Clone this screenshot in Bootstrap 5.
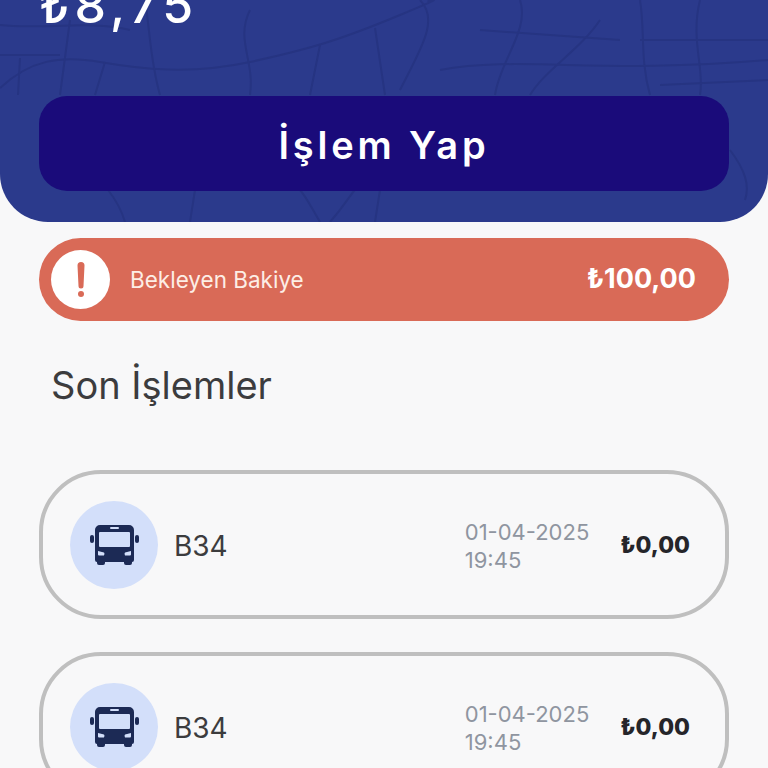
<!DOCTYPE html>
<html lang="tr">
<head>
    <meta charset="UTF-8">
    <meta name="viewport" content="width=device-width, initial-scale=1">
    <title>Kart</title>
    <link rel="stylesheet" href="https://cdn.jsdelivr.net/npm/bootstrap@5.3.0/dist/css/bootstrap.min.css">
    <style>
        html, body { height: 768px; overflow: hidden; }
        body { background: #f8f8f9; font-family: "Inter", "Liberation Sans", sans-serif; color: #3c3c3e; }
        .hero-box { height: 222px; background: #2b3a8c; border-radius: 0 0 48px 48px; padding: 0 39px; overflow: hidden; }
        .map-lines { top: 0; left: 0; }
        .hero-amount { height: 96px; margin: 0; color: #fff; font-size: 50px; font-weight: 500; line-height: 50px; letter-spacing: 5px; transform: translateY(-20px); }
        .action-btn { height: 95px; width: 100%; padding-top: 10px; background: #1a0b7a; color: #fff; border: 0; border-radius: 28px; font-size: 38px; font-weight: 600; letter-spacing: 3.800px; }
        .pending-box { height: 83px; margin: 16px 39px 0; background: #d96a57; border-radius: 42px; padding: 0 33px 0 12px; color: #fff; }
        .alert-dot { width: 59px; height: 59px; background: #fff; }
        .pending-label { font-size: 22.500px; margin-left: 20px; color: #fdeee6; }
        .pending-sum { font-size: 27px; font-weight: 700; }
        .section-title { font-size: 38px; font-weight: 400; margin: 40px 0 0 51px; line-height: 48px; }
        .tx-box { height: 149px; margin: 0 39px 33px; border: 4px solid #bfbfbf; border-radius: 62px; padding: 2px 35px 0 27px; }
        .tx-list { margin-top: 61px; }
        .bus-dot { width: 88px; height: 88px; margin-top: -2px; background: #d3dffa; }
        .tx-name { font-size: 28px; margin-left: 16px; }
        .tx-date { font-size: 22px; line-height: 28px; color: #8f95a0; margin-right: 31px; }
        .tx-sum { font-size: 23px; font-weight: 800; color: #25252a; }
    </style>
</head>
<body>
    <div class="hero-box position-relative">
        <svg class="map-lines position-absolute" width="768" height="222" viewBox="0 0 768 222" fill="none" stroke="#263482" stroke-width="2">
            <path d="M0 88 C30 60 60 55 100 62 S190 75 250 62 340 40 400 15 420 5 430 0"/>
            <path d="M420 0 C440 20 420 50 400 90M250 10 C235 40 255 60 250 95M145 0 C150 30 150 60 160 95"/>
            <path d="M0 55 H60M20 58 L18 95M70 20 L60 95M105 62 L95 95M320 45 L310 95M375 28 L385 95"/>
            <path d="M520 0 C530 30 500 60 495 95M600 20 C580 50 545 70 530 95M640 0 C645 30 640 60 650 95M700 0 C690 40 705 70 700 95"/>
            <path d="M440 70 C520 55 600 75 768 60M640 40 H768M480 30 L620 40M660 85 L768 80M0 25 C40 30 90 20 130 30"/>
            <path d="M125 222 C120 205 112 195 108 190M190 222 L195 190M320 222 C310 205 305 195 300 190M330 222 C345 205 350 195 355 190M375 222 L380 190M730 150 C745 170 750 185 745 200"/>
        </svg>
        <div class="position-relative">
            <p class="hero-amount">₺8,75</p>
            <button type="button" class="btn action-btn">İşlem Yap</button>
        </div>
    </div>

    <div class="pending-box d-flex align-items-center">
        <div class="alert-dot rounded-circle d-flex align-items-center justify-content-center">
            <svg width="8" height="35" viewBox="0 0 8 35"><path d="M4 0a3.500 3.500 0 0 1 3.500 3.500L6.500 24a2.500 2.500 0 0 1-5 0L.5 3.500A3.500 3.500 0 0 1 4 0z" fill="#d96a57"/><circle cx="4" cy="32" r="3" fill="#d96a57"/></svg>
        </div>
        <span class="pending-label">Bekleyen Bakiye</span>
        <span class="pending-sum ms-auto">₺100,00</span>
    </div>

    <h2 class="section-title">Son İşlemler</h2>

    <div class="tx-list">
        <div class="tx-box d-flex align-items-center">
            <div class="bus-dot rounded-circle d-flex align-items-center justify-content-center">
                <svg width="49" height="40" viewBox="0 0 49 40"><path fill="#1c2a55" d="M10 0h29a5 5 0 0 1 5 5v30a2 2 0 0 1-2 2v1a2 2 0 0 1-2 2h-4a2 2 0 0 1-2-2v-1H15v1a2 2 0 0 1-2 2H9a2 2 0 0 1-2-2v-1a2 2 0 0 1-2-2V5a5 5 0 0 1 5-5z"/><rect x="0" y="10" width="4" height="8" rx="2" fill="#1c2a55"/><rect x="45" y="10" width="4" height="8" rx="2" fill="#1c2a55"/><rect x="9" y="7" width="31" height="15" rx="1" fill="#d3dffa"/><rect x="20" y="2" width="9" height="2" rx="1" fill="#d3dffa"/><path d="M8 26l6 1.500q1 1 0 3H9q-1 0-1-1zM41 26l-6 1.500q-1 1 0 3h5q1 0 1-1z" fill="#d3dffa"/></svg>
            </div>
            <span class="tx-name">B34</span>
            <div class="tx-date ms-auto">01-04-2025<br>19:45</div>
            <span class="tx-sum">₺0,00</span>
        </div>
        <div class="tx-box d-flex align-items-center">
            <div class="bus-dot rounded-circle d-flex align-items-center justify-content-center">
                <svg width="49" height="40" viewBox="0 0 49 40"><path fill="#1c2a55" d="M10 0h29a5 5 0 0 1 5 5v30a2 2 0 0 1-2 2v1a2 2 0 0 1-2 2h-4a2 2 0 0 1-2-2v-1H15v1a2 2 0 0 1-2 2H9a2 2 0 0 1-2-2v-1a2 2 0 0 1-2-2V5a5 5 0 0 1 5-5z"/><rect x="0" y="10" width="4" height="8" rx="2" fill="#1c2a55"/><rect x="45" y="10" width="4" height="8" rx="2" fill="#1c2a55"/><rect x="9" y="7" width="31" height="15" rx="1" fill="#d3dffa"/><rect x="20" y="2" width="9" height="2" rx="1" fill="#d3dffa"/><path d="M8 26l6 1.500q1 1 0 3H9q-1 0-1-1zM41 26l-6 1.500q-1 1 0 3h5q1 0 1-1z" fill="#d3dffa"/></svg>
            </div>
            <span class="tx-name">B34</span>
            <div class="tx-date ms-auto">01-04-2025<br>19:45</div>
            <span class="tx-sum">₺0,00</span>
        </div>
    </div>
    <script src="https://cdn.jsdelivr.net/npm/bootstrap@5.3.0/dist/js/bootstrap.bundle.min.js"></script>
</body>
</html>
